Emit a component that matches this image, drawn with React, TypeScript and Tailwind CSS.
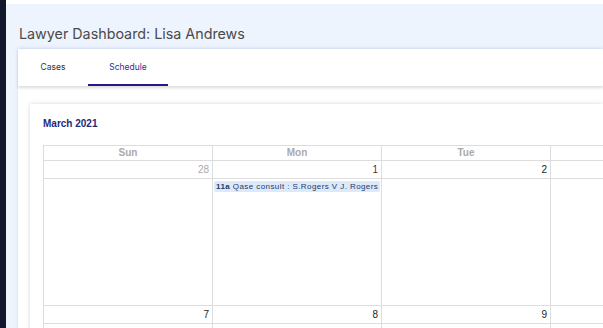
import React from "react";

const days = ["Sun", "Mon", "Tue", "Wed", "Thu", "Fri", "Sat"];
const week1 = [28, 1, 2, 3, 4, 5, 6];
const week2 = [7, 8, 9, 10, 11, 12, 13];

function DateRow({ dates, muted }: { dates: number[]; muted?: number[] }) {
  return (
    <tr className="h-[18px]">
      {dates.map((d, i) => (
        <td
          key={i}
          className={`border border-[#dddddd] pr-[3px] text-right align-middle text-[10px] leading-none ${
            muted?.includes(i) ? "text-[#aaaaaa]" : d === 1 ? "text-[#7a1c1c]" : "text-[#222222]"
          }`}
        >
          {d}
        </td>
      ))}
    </tr>
  );
}

export default function App() {
  return (
    <div className="flex h-[328px] w-[603px] overflow-hidden bg-white" style={{ fontFamily: "Inter, 'Liberation Sans', sans-serif" }}>
      <div className="w-[6px] shrink-0 bg-[#10162b]" />
      <div className="flex min-w-0 flex-1 flex-col pt-[4px]">
        <div className="flex flex-1 flex-col bg-[#eef4fd]">
          <h1 className="h-[45px] pl-[13px] pt-[21px] text-[14.3px] leading-[18px] text-[#4a4a4a]">
            Lawyer Dashboard: Lisa Andrews
          </h1>
          <div className="ml-[12px] flex flex-1 flex-col bg-white shadow-[0_-1px_3px_rgba(90,90,200,0.18)]">
            <div className="relative flex h-[37px] shrink-0 text-[8.5px] shadow-[0_2px_3px_rgba(0,0,0,0.14)]">
              <div className="flex w-[70px] items-center justify-center text-[#333333]">Cases</div>
              <div className="flex w-[80px] items-center justify-center border-b-2 border-[#27188a] pt-[2px] text-[#3a2d96]">
                Schedule
              </div>
            </div>
            <div className="flex-1 pl-[12px] pt-[18px]">
              <div className="h-full overflow-hidden bg-white pl-[13px] pt-[13px] shadow-[0_0_4px_rgba(100,100,200,0.28)]" style={{ fontFamily: "'Liberation Sans', Arial, sans-serif" }}>
                <div className="h-[28px] text-[10px] font-bold leading-[14px] text-[#1e2a7a]">March 2021</div>
                <table className="w-[1183px] table-fixed border-collapse">
                  <thead>
                    <tr className="h-[15px]">
                      {days.map((d) => (
                        <th key={d} className="w-[169px] border border-[#dddddd] text-[10px] font-bold leading-none text-[#aaaaaa]">
                          {d}
                        </th>
                      ))}
                    </tr>
                  </thead>
                  <tbody>
                    <DateRow dates={week1} muted={[0]} />
                    <tr className="h-[127px]">
                      {days.map((d, i) => (
                        <td key={d} className="border border-[#dddddd] px-[1px] pt-[2px] align-top">
                          {i === 1 && (
                            <div className="whitespace-nowrap rounded-[2px] bg-[#dce9fb] px-[2px] text-[8px] leading-[11px] tracking-[0.42px] text-[#1c3a63]">
                              <span className="font-bold">11a</span> Qase consult : S.Rogers V J. Rogers
                            </div>
                          )}
                        </td>
                      ))}
                    </tr>
                    <DateRow dates={week2} />
                    <tr className="h-[60px]">
                      {days.map((d) => (
                        <td key={d} className="border border-[#dddddd]" />
                      ))}
                    </tr>
                  </tbody>
                </table>
              </div>
            </div>
          </div>
        </div>
      </div>
    </div>
  );
}
